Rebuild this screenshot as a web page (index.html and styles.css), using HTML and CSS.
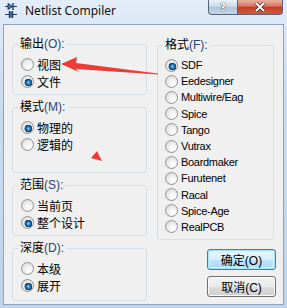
FILE: index.html
```html
<!DOCTYPE html>
<html lang="zh-CN">
<head>
    <meta charset="UTF-8">
    <title>Netlist Compiler</title>
    <link rel="stylesheet" href="styles.css">
</head>
<body>
    <div class="window">
        <!-- Title bar -->
        <div class="titlebar">
            <svg class="app-icon" viewBox="0 0 12 15" width="12" height="15">
                <line x1="0" y1="3.5" x2="12" y2="3.5" stroke="#24395a" stroke-width="1"/>
                <polygon points="3,0.5 3,6.5 7.5,3.5" fill="#3a7bd0" stroke="#24395a" stroke-width="1"/>
                <line x1="8" y1="0" x2="8" y2="7" stroke="#24395a" stroke-width="1.4"/>
                <line x1="0" y1="11.5" x2="12" y2="11.5" stroke="#24395a" stroke-width="1"/>
                <rect x="4" y="8.5" width="4" height="6" fill="#3a7bd0"/>
                <line x1="4.5" y1="8" x2="4.5" y2="15" stroke="#24395a" stroke-width="1.4"/>
                <line x1="7.5" y1="8" x2="7.5" y2="15" stroke="#24395a" stroke-width="1.4"/>
            </svg>
            <span class="title">Netlist Compiler</span>
            <div class="caption-buttons">
                <span class="cap-btn help">?</span>
                <span class="cap-btn close">
                    <svg viewBox="0 0 12 10" width="12" height="10">
                        <path d="M2 1 L10 9 M10 1 L2 9" stroke="#3a2a2a" stroke-width="3.2"/>
                        <path d="M2 1 L10 9 M10 1 L2 9" stroke="#fff" stroke-width="1.8"/>
                    </svg>
                </span>
            </div>
        </div>

        <!-- Dialog body -->
        <div class="client">
            <div class="col-left">
                <fieldset class="group">
                    <legend>输出<span class="key">(O):</span></legend>
                    <label class="opt"><input type="radio" name="out">视图</label>
                    <label class="opt"><input type="radio" name="out" checked>文件</label>
                </fieldset>
                <fieldset class="group g-mode">
                    <legend>模式<span class="key">(M):</span></legend>
                    <label class="opt"><input type="radio" name="mode" checked>物理的</label>
                    <label class="opt"><input type="radio" name="mode">逻辑的</label>
                </fieldset>
                <fieldset class="group">
                    <legend>范围<span class="key">(S):</span></legend>
                    <label class="opt"><input type="radio" name="scope">当前页</label>
                    <label class="opt"><input type="radio" name="scope" checked>整个设计</label>
                </fieldset>
                <fieldset class="group g-depth">
                    <legend>深度<span class="key">(D):</span></legend>
                    <label class="opt"><input type="radio" name="depth">本级</label>
                    <label class="opt"><input type="radio" name="depth" checked>展开</label>
                </fieldset>
            </div>

            <div class="col-right">
                <fieldset class="group g-format">
                    <legend>格式<span class="key">(F):</span></legend>
                    <label class="opt"><input type="radio" name="fmt" checked>SDF</label>
                    <label class="opt"><input type="radio" name="fmt">Eedesigner</label>
                    <label class="opt"><input type="radio" name="fmt">Multiwire/Eag</label>
                    <label class="opt"><input type="radio" name="fmt">Spice</label>
                    <label class="opt"><input type="radio" name="fmt">Tango</label>
                    <label class="opt"><input type="radio" name="fmt">Vutrax</label>
                    <label class="opt"><input type="radio" name="fmt">Boardmaker</label>
                    <label class="opt"><input type="radio" name="fmt">Furutenet</label>
                    <label class="opt"><input type="radio" name="fmt">Racal</label>
                    <label class="opt"><input type="radio" name="fmt">Spice-Age</label>
                    <label class="opt"><input type="radio" name="fmt">RealPCB</label>
                </fieldset>
                <div class="actions">
                    <button class="btn default">确定(O)</button>
                    <button class="btn">取消(C)</button>
                </div>
            </div>
        </div>

        <!-- Red marks drawn over the screenshot -->
        <svg class="annot" viewBox="0 0 287 308" width="287" height="308">
            <polygon points="61,64 77,57 76,63 158,73.6 158,74.4 76,69 79,72" fill="#ee3b36"/>
            <polygon points="97,151 91,158 102,161" fill="#ee3b36"/>
        </svg>
    </div>
</body>
</html>
```

FILE: styles.css
```css
/* Global */
body {
    margin: 0;
    font-family: "Liberation Sans", "Noto Sans CJK SC", sans-serif;
    font-size: 12px;
    color: #000;
}

/* Window frame */
.window {
    position: relative;
    width: 287px;
    height: 308px;
    box-sizing: border-box;
    padding: 0 3px 3px;
    display: flex;
    flex-direction: column;
    overflow: hidden;
    background: linear-gradient(#e3edf8, #cbdcef 30%, #c0d3ea);
}

/* Title bar */
.titlebar {
    height: 24px;
    display: flex;
    align-items: flex-start;
    flex-shrink: 0;
}

.app-icon {
    margin: 3px 0 0 2px;
}

.title {
    margin: 2px 0 0 8px;
    font-family: "Noto Sans", sans-serif;
    font-size: 12px;
    line-height: 17px;
    color: #111;
}

.caption-buttons {
    margin-left: auto;
    margin-right: 1px;
    display: flex;
}

.cap-btn {
    height: 15px;
    box-sizing: border-box;
    border: 1px solid #56657a;
    border-top: none;
    display: flex;
    justify-content: center;
    align-items: center;
}

.help {
    width: 30px;
    border-radius: 0 0 0 4px;
    background: linear-gradient(#e9f0f8, #cfdcea 45%, #b3c4d8 50%, #c5d4e6);
    color: #fff;
    font-family: "DejaVu Sans", sans-serif;
    font-weight: bold;
    font-size: 11px;
    text-shadow: 0 0 1px #2d3a4c, 0 0 1px #2d3a4c;
}

.close {
    width: 45px;
    border-left: none;
    border-radius: 0 0 4px 0;
    background: linear-gradient(#eab2a4, #d8705d 45%, #c33d28 50%, #d4583d);
}

/* Client area */
.client {
    flex: 1;
    background: #f0f0f0;
    border: 1px solid #8ea3bd;
    display: grid;
    grid-template-columns: 135px 119px;
    column-gap: 10px;
    align-items: start;
    padding: 12px 0 0 8px;
}

.col-left {
    display: flex;
    flex-direction: column;
    gap: 5px;
}

.col-right {
    margin-top: 1px;
}

/* Group boxes */
.group {
    margin: 0;
    padding: 5px 0 4px;
    border: 1px solid #d5dfe5;
    border-radius: 3px;
    min-width: 0;
}

.group legend {
    margin-left: 5px;
    padding: 0 2px;
    line-height: 14px;
}

.key {
    color: #24467a;
}

.g-mode {
    padding-bottom: 19px;
}

.g-depth {
    padding-bottom: 6px;
}

.g-format {
    margin-right: 2px;
}

/* Radio rows */
.opt {
    display: flex;
    align-items: center;
    height: 17px;
    padding-left: 8px;
}

.g-format .opt {
    height: 16.2px;
    padding-left: 7px;
    font-size: 11px;
    letter-spacing: -0.3px;
}

.opt input {
    appearance: none;
    -webkit-appearance: none;
    width: 13px;
    height: 13px;
    margin: 0 3px 0 0;
    flex-shrink: 0;
    border: 1px solid #929292;
    border-radius: 50%;
    box-sizing: border-box;
    background: radial-gradient(circle at 65% 70%, #ffffff 0, #f3f3f3 35%, #d2d2d2 100%);
}

.opt input:checked {
    background:
        radial-gradient(circle at 58% 60%, #8fdcff 0, #2b8bd0 1.5px, #14508c 3px, #0e3d6e 3.6px, transparent 4.1px),
        radial-gradient(circle at 65% 70%, #ffffff 0, #f3f3f3 35%, #d2d2d2 100%);
}

/* Buttons */
.actions {
    display: flex;
    flex-direction: column;
    align-items: flex-end;
    gap: 6px;
    margin-top: 9px;
}

.btn {
    width: 69px;
    height: 21px;
    padding: 0;
    font-family: inherit;
    font-size: 12px;
    color: #000;
    border: 1px solid #707070;
    border-radius: 3px;
    background: linear-gradient(#f2f2f2, #ebebeb 50%, #dddddd 51%, #cfcfcf);
    box-shadow: inset 0 0 0 1px #fbfbfb;
}

.btn.default {
    border-color: #3c7fb1;
    box-shadow: inset 0 0 0 1px #a6e2fb, inset 0 0 0 2px #d9f2fd;
    background: linear-gradient(#eaf6fd, #d9f0fc 50%, #bee6fd 51%, #a7d9f5);
}

/* Annotation layer */
.annot {
    position: absolute;
    top: 0;
    left: 0;
    pointer-events: none;
}
```
